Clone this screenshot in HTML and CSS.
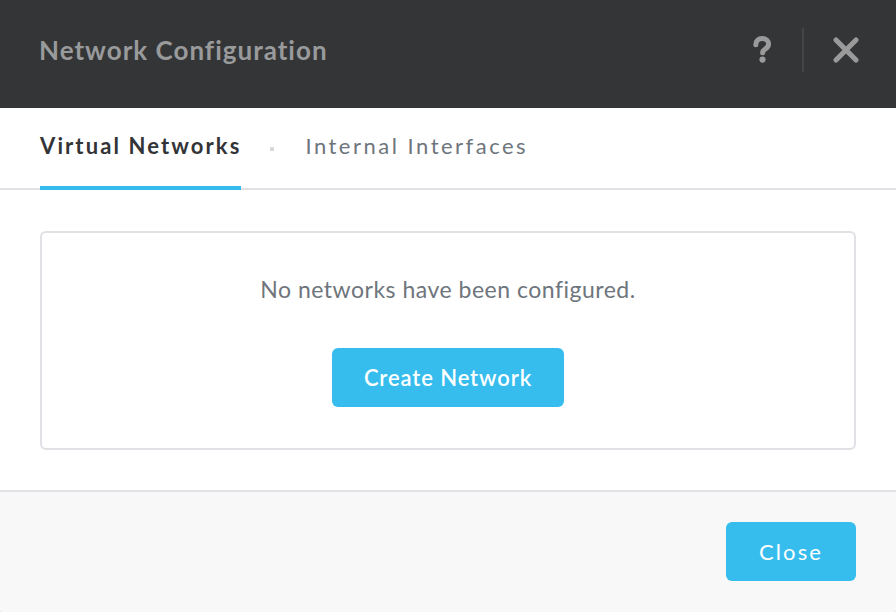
FILE: index.html
```html
<!DOCTYPE html>
<html>
<head>
<meta charset="utf-8">
<link rel="stylesheet" href="styles.css">
</head>
<body>
<div class="modal">
  <header class="modal-header">
    <h1 class="title">Network Configuration</h1>
    <div class="header-actions">
      <button class="icon-btn help" aria-label="Help">
        <svg width="20" height="28" viewBox="0 0 20 28">
          <path d="M3.8 8.8 C3.8 4.6 6.6 2.6 10.2 2.6 C14 2.6 16.6 4.8 16.6 8 C16.6 11 14.6 12.2 12.9 13.3 C11.6 14.1 10.6 14.8 10.6 16.8" fill="none" stroke="#9a9a9a" stroke-width="5" stroke-linecap="round"/>
          <circle cx="10.5" cy="23.6" r="3.1" fill="#9a9a9a"/>
        </svg>
      </button>
      <span class="divider"></span>
      <button class="icon-btn close" aria-label="Close">
        <svg width="28" height="28" viewBox="0 0 28 28">
          <path d="M4 4 L24 24 M24 4 L4 24" stroke="#9a9a9a" stroke-width="5.2" stroke-linecap="round"/>
        </svg>
      </button>
    </div>
  </header>
  <nav class="tabs">
    <a class="tab active">Virtual Networks</a>
    <span class="tab-sep"></span>
    <a class="tab">Internal Interfaces</a>
  </nav>
  <main class="content">
    <div class="empty-box">
      <p class="empty-text">No networks have been configured.</p>
      <button class="btn btn-create">Create Network</button>
    </div>
  </main>
  <footer class="modal-footer">
    <button class="btn btn-close">Close</button>
  </footer>
</div>
</body>
</html>
```
FILE: styles.css
```css
* { box-sizing: border-box; }
html, body {
  margin: 0;
  padding: 0;
  width: 896px;
  height: 612px;
  overflow: hidden;
  background: #e9e9e9;
}
body {
  font-family: "Lato", "Open Sans", sans-serif;
}
.modal {
  width: 896px;
  height: 612px;
  display: flex;
  flex-direction: column;
  background: #fff;
  border-radius: 0 0 4px 4px;
  overflow: hidden;
}
.modal-header {
  height: 108px;
  flex: 0 0 108px;
  background: #343537;
  display: flex;
  align-items: center;
  justify-content: space-between;
  padding: 0 36px 9px 39px;
}
.title {
  margin: 0;
  font-size: 26px;
  font-weight: 700;
  color: #999a9b;
  letter-spacing: 1px;
}
.header-actions {
  display: flex;
  align-items: center;
  height: 44px;
}
.icon-btn {
  background: none;
  border: 0;
  padding: 0;
  display: flex;
  align-items: center;
  justify-content: center;
  cursor: pointer;
}
.help { width: 22px; margin-right: 29px; margin-left: 2px; }
.divider {
  width: 2px;
  height: 44px;
  background: #444547;
}
.close { margin-left: 28px; }
.tabs {
  height: 82px;
  flex: 0 0 82px;
  display: flex;
  align-items: stretch;
  padding: 0 40px;
  border-bottom: 2px solid #dfe1e4;
}
.tab {
  display: flex;
  align-items: center;
  font-size: 22px;
  letter-spacing: 2.5px;
  color: #6e757c;
  padding-bottom: 4px;
  margin-bottom: -2px;
  border-bottom: 4px solid transparent;
}
.tab.active {
  color: #333437;
  font-weight: 700;
  letter-spacing: 2.1px;
  border-bottom-color: #35bcec;
}
.tab-sep {
  align-self: center;
  width: 4px;
  height: 4px;
  background: #d6d8da;
  margin: 2px 31px 0 29px;
}
.content {
  flex: 1;
  padding: 41px 40px 40px;
  border-bottom: 2px solid #dfe1e4;
}
.empty-box {
  border: 2px solid #dfe1e4;
  border-radius: 6px;
  height: 219px;
  display: flex;
  flex-direction: column;
  align-items: center;
  padding-top: 42px;
}
.empty-text {
  margin: 0;
  font-size: 23px;
  color: #6e757c;
  letter-spacing: 0.5px;
}
.btn {
  background: #36bdee;
  color: #fff;
  border: 0;
  border-radius: 6px;
  font-family: inherit;
  font-size: 22px;
  font-weight: 600;
  letter-spacing: 0.9px;
  cursor: pointer;
}
.btn-create {
  margin-top: 45px;
  width: 232px;
  height: 59px;
}
.modal-footer {
  flex: 0 0 120px;
  background: #f8f8f8;
  display: flex;
  justify-content: flex-end;
  align-items: flex-start;
  padding: 30px 40px 0;
}
.btn-close {
  width: 130px;
  height: 59px;
  font-weight: 400;
  letter-spacing: 2.1px;
}
```
